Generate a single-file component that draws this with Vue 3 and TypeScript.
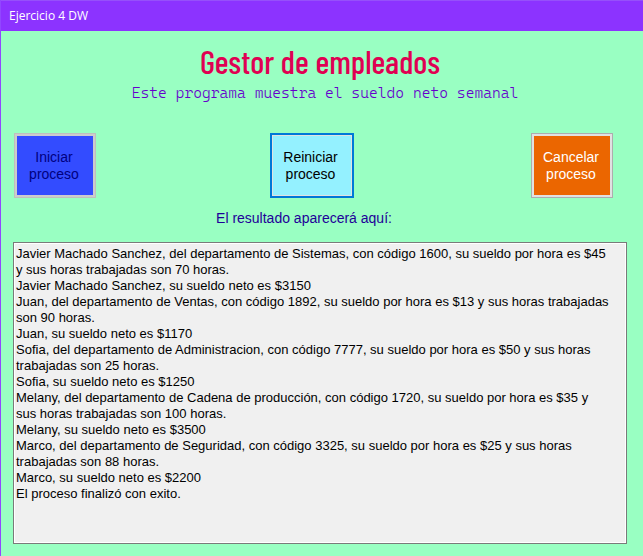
<script setup lang="ts">
import { ref } from 'vue'

interface Employee {
  name: string
  department: string
  code: number
  rate: number
  hours: number
}

const employees: Employee[] = [
  { name: 'Javier Machado Sanchez', department: 'Sistemas', code: 1600, rate: 45, hours: 70 },
  { name: 'Juan', department: 'Ventas', code: 1892, rate: 13, hours: 90 },
  { name: 'Sofia', department: 'Administracion', code: 7777, rate: 50, hours: 25 },
  { name: 'Melany', department: 'Cadena de producción', code: 1720, rate: 35, hours: 100 },
  { name: 'Marco', department: 'Seguridad', code: 3325, rate: 25, hours: 88 },
]

function report(): string {
  const lines = employees.flatMap((e) => [
    `${e.name}, del departamento de ${e.department}, con código ${e.code}, su sueldo por hora es $${e.rate} y sus horas trabajadas son ${e.hours} horas.`,
    `${e.name}, su sueldo neto es $${e.rate * e.hours}`,
  ])
  return [...lines, 'El proceso finalizó con exito.'].join('\n')
}

const started = ref(true)
const output = ref(report())

function start() {
  started.value = true
  output.value = report()
}

function reset() {
  started.value = false
  output.value = ''
}
</script>

<template>
  <div class="window">
    <header class="titlebar">Ejercicio 4 DW</header>
    <main class="content">
      <h1 class="title">Gestor de empleados</h1>
      <p class="subtitle">Este programa muestra el sueldo neto semanal</p>
      <div class="actions">
        <button class="action start" type="button" :disabled="started" @click="start">Iniciar proceso</button>
        <button class="action restart" type="button" @click="reset">Reiniciar proceso</button>
        <button class="action cancel" type="button" @click="reset">Cancelar proceso</button>
      </div>
      <label class="caption" for="result">El resultado aparecerá aquí:</label>
      <textarea id="result" class="result" readonly spellcheck="false" :value="output"></textarea>
    </main>
  </div>
</template>

<style>
body {
  margin: 0;
  background: #99ffc2;
}
</style>

<style scoped>
.window {
  box-sizing: border-box;
  display: flex;
  flex-direction: column;
  min-height: 100vh;
  border-left: 1px solid #9147ff;
  background: #99ffc2;
  font-family: "Liberation Sans", Arial, sans-serif;
}

.titlebar {
  box-sizing: border-box;
  height: 31px;
  padding-left: 8px;
  border-top: 1px solid #9650fa;
  background: #8c33ff;
  color: #fff;
  font: 12px/30px "Segoe UI", "Open Sans", sans-serif;
}

.content {
  display: flex;
  flex: 1;
  flex-direction: column;
  padding: 11px 16px 12px 12px;
}

.title {
  margin: 0;
  color: #e00052;
  font: 500 33px/38px "Bahnschrift Condensed", "Barlow Condensed", "Roboto Condensed", sans-serif;
  text-align: center;
}

.subtitle {
  margin: 0;
  padding-left: 10px;
  color: #6600cc;
  font: 350 15px/26px "Cascadia Mono", "DejaVu Sans Mono", monospace;
  text-align: center;
}

.actions {
  display: flex;
  justify-content: space-between;
  margin: 27px 14px 12px 1px;
}

.action {
  box-sizing: border-box;
  width: 82px;
  height: 65px;
  padding: 0 9px 0 7px;
  border: 1px solid #adadad;
  font: 14px/17px "Liberation Sans", Arial, sans-serif;
}

.start {
  border-color: #bfbfbf;
  background: #334cff;
  box-shadow: inset 0 0 0 2px #cccccc;
  color: #000080;
}

.restart {
  width: 84px;
  margin-right: 4px;
  border: 2px solid #0078d7;
  background: #94f1ff;
  box-shadow: inset 0 0 0 1px #e1e1e1;
  color: #000;
}

.cancel {
  background: #eb6600;
  box-shadow: inset 0 0 0 2px #e1e1e1;
  color: #fff;
}

.caption {
  align-self: center;
  margin-bottom: 15px;
  padding-right: 32px;
  color: #1f0099;
  font-size: 14px;
  line-height: 17px;
}

.result {
  box-sizing: border-box;
  display: block;
  flex: 1;
  width: 100%;
  min-height: 280px;
  margin: 0;
  padding: 3px 16px 3px 2px;
  overflow: hidden;
  border: 1px solid #7a7a7a;
  outline: none;
  background: #f0f0f0;
  box-shadow: inset 0 0 0 1px #fff;
  color: #000;
  font: 13px/16px "Liberation Sans", Arial, sans-serif;
  resize: none;
}
</style>
